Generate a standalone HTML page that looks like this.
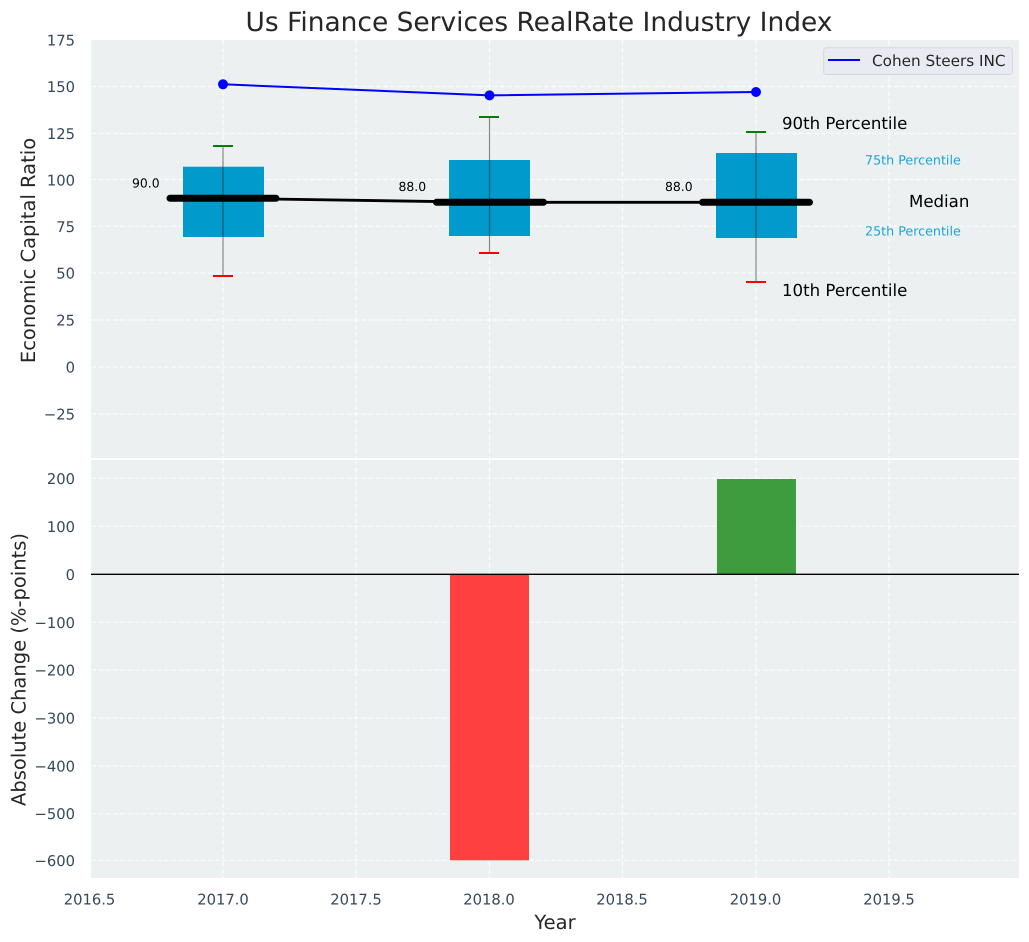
<!DOCTYPE html>
<html><head><meta charset="utf-8"><style>
html,body{margin:0;padding:0;background:#fff;width:1029px;height:942px;overflow:hidden}
svg{display:block;font-family:"DejaVu Sans",sans-serif;text-rendering:geometricPrecision}
.g line{stroke:#fff;stroke-width:1.2;stroke-dasharray:5.1 2.2;opacity:.8}
.t text{fill:#34495e;font-size:14.75px}
.yt text{text-anchor:end}
.xt text{text-anchor:middle}
.l{fill:#262626;font-size:19.5px;text-anchor:middle}
</style></head><body>
<svg width="1029" height="942" viewBox="0 0 1029 942" xmlns="http://www.w3.org/2000/svg">
<rect x="91" y="40" width="928" height="418" fill="#ecf0f1"/>
<rect x="91" y="460" width="928" height="418" fill="#ecf0f1"/>
<g class="g">
<line x1="223" y1="40" x2="223" y2="458"/><line x1="356" y1="40" x2="356" y2="458"/><line x1="489.5" y1="40" x2="489.5" y2="458"/><line x1="622.5" y1="40" x2="622.5" y2="458"/><line x1="756" y1="40" x2="756" y2="458"/><line x1="889" y1="40" x2="889" y2="458"/>
<line x1="91" y1="86.5" x2="1019" y2="86.5"/><line x1="91" y1="133.3" x2="1019" y2="133.3"/><line x1="91" y1="179.5" x2="1019" y2="179.5"/><line x1="91" y1="226.3" x2="1019" y2="226.3"/><line x1="91" y1="273" x2="1019" y2="273"/><line x1="91" y1="320" x2="1019" y2="320"/><line x1="91" y1="367" x2="1019" y2="367"/><line x1="91" y1="414" x2="1019" y2="414"/>
<line x1="223" y1="460" x2="223" y2="878"/><line x1="356" y1="460" x2="356" y2="878"/><line x1="489.5" y1="460" x2="489.5" y2="878"/><line x1="622.5" y1="460" x2="622.5" y2="878"/><line x1="756" y1="460" x2="756" y2="878"/><line x1="889" y1="460" x2="889" y2="878"/>
<line x1="91" y1="478.3" x2="1019" y2="478.3"/><line x1="91" y1="526.3" x2="1019" y2="526.3"/><line x1="91" y1="622.3" x2="1019" y2="622.3"/><line x1="91" y1="670" x2="1019" y2="670"/><line x1="91" y1="718" x2="1019" y2="718"/><line x1="91" y1="766" x2="1019" y2="766"/><line x1="91" y1="813.7" x2="1019" y2="813.7"/><line x1="91" y1="860.3" x2="1019" y2="860.3"/>
</g>
<!-- boxes -->
<rect x="183" y="166.7" width="81" height="70.3" fill="#009bcc"/>
<rect x="449" y="160" width="81" height="76" fill="#009bcc"/>
<rect x="716" y="153" width="81" height="85" fill="#009bcc"/>
<!-- whiskers -->
<g stroke="#000" stroke-opacity=".45" stroke-width="1.2">
<line x1="223" y1="146" x2="223" y2="276"/><line x1="489.5" y1="117" x2="489.5" y2="253"/><line x1="756" y1="132" x2="756" y2="282"/>
</g>
<g stroke="#008000" stroke-width="2"><line x1="213" y1="146" x2="233" y2="146"/><line x1="479" y1="117" x2="499" y2="117"/><line x1="746" y1="132" x2="766" y2="132"/></g>
<g stroke="#ff0000" stroke-width="2"><line x1="213" y1="276" x2="233" y2="276"/><line x1="479" y1="253" x2="499" y2="253"/><line x1="746" y1="282" x2="766" y2="282"/></g>
<!-- median -->
<polyline points="223,198.3 489.5,202.3 756,202.3" fill="none" stroke="#000" stroke-width="2.8"/>
<g stroke="#000" stroke-width="7" stroke-linecap="round">
<line x1="170" y1="198.3" x2="276" y2="198.3"/><line x1="436.5" y1="202.3" x2="543.5" y2="202.3"/><line x1="702.5" y1="202.3" x2="809.5" y2="202.3"/>
</g>
<!-- blue -->
<polyline points="223,84.3 489.5,95.4 756,92" fill="none" stroke="#0000ff" stroke-width="2"/>
<circle cx="223" cy="84.3" r="5" fill="#0000ff"/><circle cx="489.5" cy="95.4" r="5" fill="#0000ff"/><circle cx="756" cy="92" r="5" fill="#0000ff"/>
<!-- legend -->
<rect x="823.7" y="47.7" width="188.6" height="26.8" rx="2.5" fill="#eaeaf2" stroke="#d6d6dd" stroke-width="1"/>
<line x1="828" y1="60" x2="860" y2="60" stroke="#0000ff" stroke-width="2"/>
<text x="872" y="66" font-size="15.25" fill="#262626">Cohen Steers INC</text>
<!-- annotations -->
<g font-size="16.6" fill="#000">
<text x="782" y="129">90th Percentile</text>
<text x="782" y="296">10th Percentile</text>
<text x="909" y="207">Median</text>
</g>
<g font-size="12.7" fill="#1aa5d6">
<text x="865" y="164.5">75th Percentile</text>
<text x="865" y="235.5">25th Percentile</text>
</g>
<g font-size="12.4" fill="#000">
<text x="132" y="187.5">90.0</text>
<text x="398.5" y="191">88.0</text>
<text x="665" y="191">88.0</text>
</g>
<!-- bars -->
<rect x="450" y="574.3" width="79" height="286" fill="#ff4040"/>
<rect x="717" y="479" width="79" height="95.3" fill="#3e9c3e"/>
<line x1="91" y1="574.3" x2="1019" y2="574.3" stroke="#000" stroke-width="1.4"/>
<!-- tick labels -->
<g class="t yt">
<text x="75" y="45.5">175</text><text x="75" y="92">150</text><text x="75" y="139">125</text><text x="75" y="185.5">100</text><text x="75" y="232">75</text><text x="75" y="278.5">50</text><text x="75" y="325.5">25</text><text x="75" y="372.5">0</text><text x="75" y="419.5">−25</text>
<text x="75" y="484">200</text><text x="75" y="532">100</text><text x="75" y="580">0</text><text x="75" y="628">−100</text><text x="75" y="675.5">−200</text><text x="75" y="723.5">−300</text><text x="75" y="771.5">−400</text><text x="75" y="819">−500</text><text x="75" y="866">−600</text>
</g>
<g class="t xt">
<text x="89.5" y="904.5">2016.5</text><text x="223" y="904.5">2017.0</text><text x="356" y="904.5">2017.5</text><text x="489" y="904.5">2018.0</text><text x="622" y="904.5">2018.5</text><text x="755.5" y="904.5">2019.0</text><text x="889" y="904.5">2019.5</text>
</g>
<text x="539" y="31" font-size="26.45" fill="#262626" text-anchor="middle">Us Finance Services RealRate Industry Index</text>
<text class="l" x="555" y="929">Year</text>
<text class="l" transform="translate(35 250.5) rotate(-90)" x="0" y="0">Economic Capital Ratio</text>
<text class="l" transform="translate(25.5 669.5) rotate(-90)" x="0" y="0">Absolute Change (%-points)</text>
</svg>
</body></html>
